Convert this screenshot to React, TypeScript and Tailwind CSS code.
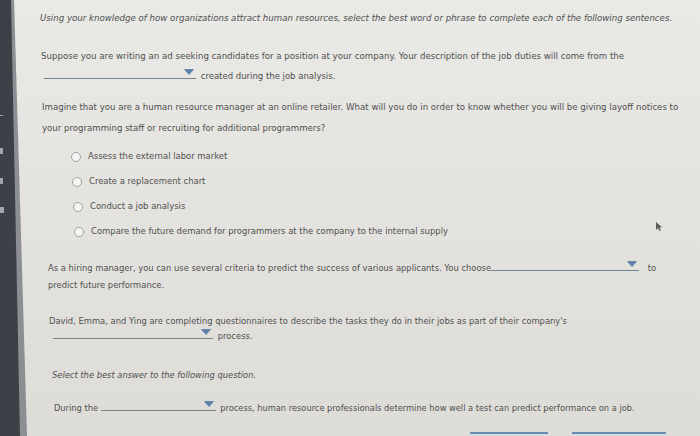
const Arrow = () => (
    <svg width="10" height="6" viewBox="0 0 10 6" className="absolute right-[2px] bottom-[3px]">
        <path d="M0.5 0.5 L9.5 0.5 L5 5.5 Z" fill="#5b7fa6" stroke="#5b7fa6" strokeWidth="0.8" strokeLinejoin="round" />
    </svg>
);

const Blank = ({ w }: { w: string }) => (
    <span className={`relative inline-block align-baseline h-[11px] border-b-[1.5px] border-[#74858f] ${w}`}>
        <Arrow />
    </span>
);

const Radio = ({ label, ml }: { label: string; ml: string }) => (
    <div className={`flex items-center h-[25px] ${ml}`}>
        <span className="w-[10px] h-[10px] rounded-full border border-[#a0a0a0] bg-[#f5f5f3] mr-[7px]" />
        <span>{label}</span>
    </div>
);

const Bezel = () => (
    <svg width="27" height="436" viewBox="0 0 27 436" className="shrink-0 block">
        <polygon points="0,0 14,0 27,436 0,436" fill="#8b8f93" />
        <polygon points="0,0 11,0 20,436 0,436" fill="#3c4147" />
        <rect x="0" y="115" width="3" height="1" fill="#9aa0a6" />
        <rect x="0" y="148" width="3" height="6" fill="#a0a6ac" />
        <rect x="0" y="178" width="3" height="6" fill="#a0a6ac" />
        <rect x="0" y="207" width="4" height="6" fill="#a0a6ac" />
    </svg>
);

// mouse pointer caught in the photo
const Cursor = () => (
    <svg width="8" height="11" viewBox="0 0 8 11" className="absolute left-[655px] top-[221px] opacity-80">
        <path d="M1 1 L1 9 L3 7 L4.5 10 L5.8 9.4 L4.4 6.5 L7 6.3 Z" fill="#3a3a3a" />
    </svg>
);

export default function App() {
    return (
        <div className="relative w-[700px] h-[436px] overflow-hidden flex bg-gradient-to-b from-[#e9e9e6] to-[#dedcd7] text-[#505050] font-['DejaVu_Sans',Verdana,sans-serif] text-[8.6px]">
            <Bezel />
            <div className="flex-1 flex flex-col">
                <p className="mt-[12px] ml-[13px] leading-[12px] italic text-[8.65px] whitespace-nowrap">
                    Using your knowledge of how organizations attract human resources, select the best word or phrase to complete each of the following sentences.
                </p>

                <p className="mt-[26px] ml-[14px] leading-[12px] text-[8.65px] whitespace-nowrap">
                    Suppose you are writing an ad seeking candidates for a position at your company. Your description of the job duties will come from the
                </p>
                <p className="mt-[6px] ml-[17px] leading-[12px] text-[8.5px] whitespace-nowrap">
                    <Blank w="w-[152px]" /> <span className="ml-[2px]">created during the job analysis.</span>
                </p>

                <p className="mt-[15px] ml-[15px] leading-[21px] text-[8.6px] whitespace-nowrap">
                    Imagine that you are a human resource manager at an online retailer. What will you do in order to know whether you will be giving layoff notices to
                    <br />
                    your programming staff or recruiting for additional programmers?
                </p>

                <div className="mt-[5px] flex flex-col text-[8.45px]">
                    <Radio ml="ml-[44px]" label="Assess the external labor market" />
                    <Radio ml="ml-[45px]" label="Create a replacement chart" />
                    <Radio ml="ml-[46px]" label="Conduct a job analysis" />
                    <Radio ml="ml-[47px]" label="Compare the future demand for programmers at the company to the internal supply" />
                </div>

                <p className="mt-[16px] ml-[21px] leading-[17px] text-[8.4px] whitespace-nowrap">
                    As a hiring manager, you can use several criteria to predict the success of various applicants. You choose
                    <Blank w="w-[148px]" /> <span className="ml-[6px]">to</span>
                    <br />
                    predict future performance.
                </p>

                <p className="mt-[20px] ml-[22px] leading-[14px] text-[8.38px] whitespace-nowrap">
                    David, Emma, and Ying are completing questionnaires to describe the tasks they do in their jobs as part of their company's
                    <br />
                    <span className="ml-[4px]" />
                    <Blank w="w-[160px]" /> <span className="ml-[2px]">process.</span>
                </p>

                <p className="mt-[26px] ml-[25px] leading-[12px] italic text-[8.33px] whitespace-nowrap">
                    Select the best answer to the following question.
                </p>

                <p className="mt-[19px] ml-[27px] leading-[12px] text-[8.28px] whitespace-nowrap">
                    During the <Blank w="w-[115px]" /> <span className="ml-[2px]">process, human resource professionals determine how well a test can predict performance on a job.</span>
                </p>

                <div className="mt-[18px] flex gap-[24px] ml-[443px]">
                    <div className="w-[78px] h-[12px] border-t-2 border-[#6a8db3] bg-[#d9dbdc]" />
                    <div className="w-[94px] h-[12px] border-t-2 border-[#6a8db3] bg-[#d9dbdc]" />
                </div>
            </div>
            <Cursor />
        </div>
    );
}
